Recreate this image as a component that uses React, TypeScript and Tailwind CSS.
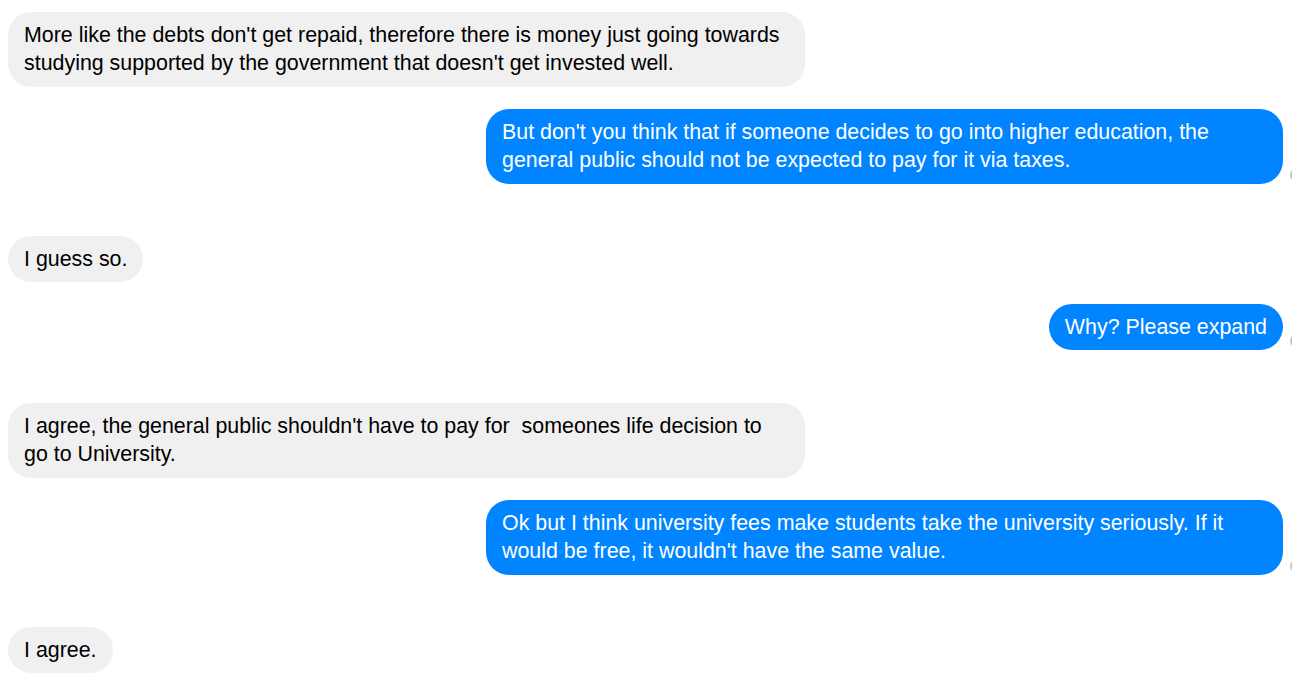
import React from "react";

type Msg = { me: boolean; text: string; mt: string };

const msgs: Msg[] = [
  { me: false, text: "More like the debts don't get repaid, therefore there is money just going towards studying supported by the government that doesn't get invested well.", mt: "mt-[12px]" },
  { me: true, text: "But don't you think that if someone decides to go into higher education, the general public should not be expected to pay for it via taxes.", mt: "mt-[22.5px]" },
  { me: false, text: "I guess so.", mt: "mt-[52.5px]" },
  { me: true, text: "Why? Please expand", mt: "mt-[22px]" },
  { me: false, text: "I agree, the general public shouldn't have to pay for \u00a0someones life decision to go to University.", mt: "mt-[53px]" },
  { me: true, text: "Ok but I think university fees make students take the university seriously. If it would be free, it wouldn't have the same value.", mt: "mt-[22.5px]" },
  { me: false, text: "I agree.", mt: "mt-[52.5px]" },
];

export default function App() {
  return (
    <div
      className="w-[1292px] h-[675px] overflow-hidden bg-white flex flex-col pl-[8px] pr-[9px]"
      style={{ fontFamily: '"Liberation Sans", Arial, sans-serif' }}
    >
      {msgs.map((m, i) => (
        <div key={i} className={`flex shrink-0 ${m.me ? "justify-end" : "justify-start"} ${m.mt}`}>
          <div
            className={`relative max-w-[797px] rounded-[23px] px-[16px] py-[8.75px] text-[21.4px] leading-[28.5px] ${
              m.me ? "bg-[#0084ff] text-white" : "bg-[#f0f0f0] text-black"
            }`}
          >
            {m.text}
            {m.me && (
              <span className="absolute left-[calc(100%+7px)] bottom-[2px] w-[14px] h-[14px] rounded-full bg-[#c6c6c6]" />
            )}
          </div>
        </div>
      ))}
    </div>
  );
}
